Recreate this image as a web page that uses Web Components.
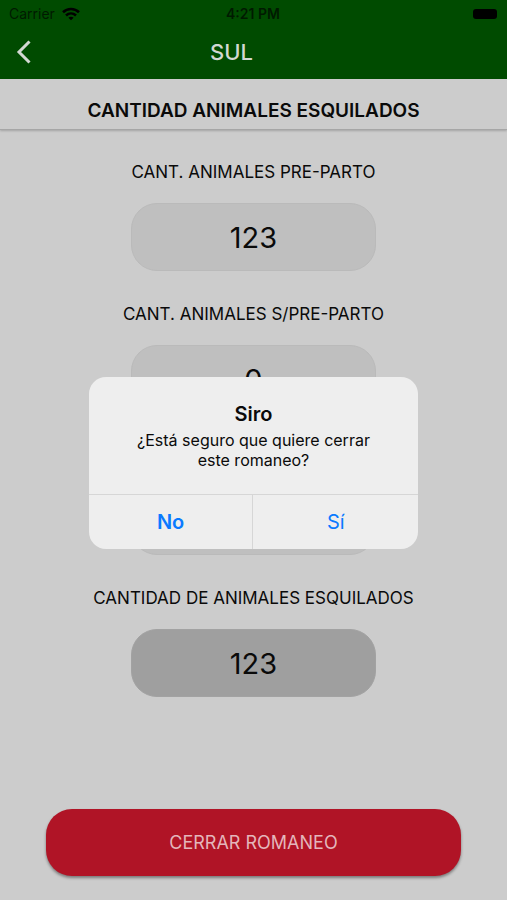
<!DOCTYPE html>
<html lang="es">
<head>
<meta charset="utf-8">
<meta name="viewport" content="width=device-width, initial-scale=1">
<title>SUL</title>
<style>
  html, body { height: 100%; }
  body { margin: 0; background: #ccc; color: #0a0a0a; font-family: Inter, "Liberation Sans", sans-serif; }
</style>
</head>
<body>
<siro-screen></siro-screen>
<script>
const define = (name, html, setup) => customElements.define(name, class extends HTMLElement {
  connectedCallback() {
    if (this.shadowRoot) return;
    const template = document.createElement('template');
    template.innerHTML = html;
    this.attachShadow({ mode: 'open' }).append(template.content.cloneNode(true));
    if (setup) setup(this, this.shadowRoot);
  }
});

define('status-bar', `
  <style>
    :host { display: grid; grid-template-columns: 1fr auto 1fr; align-items: center; height: 27px; padding: 0 10px 0 9px; font-size: 14px; line-height: 18px; color: #001a00; }
    .left { display: flex; align-items: center; gap: 7px; }
    .time { font-weight: 600; }
    .battery { justify-self: end; width: 24px; height: 10px; border-radius: 3px; background: #000; }
  </style>
  <span class="left"><span>Carrier</span>
    <svg width="18" height="14" viewBox="0 0 18 14" fill="none" stroke="#000" stroke-width="2.6" aria-label="Wi-Fi">
      <path d="M1 5.2C5.400 .9 12.600 .9 17 5.200"/><path d="M4 8.500C6.900 5.800 11.100 5.800 14 8.500"/><path d="M6.400 10.700C7.900 9.300 10.100 9.300 11.600 10.700L9 13.300Z" fill="#000" stroke="none"/>
    </svg></span>
  <span class="time">4:21 PM</span>
  <span class="battery" role="img" aria-label="Batería"></span>`);

define('nav-bar', `
  <style>
    :host { display: grid; grid-template-columns: 48px 1fr 92px; align-items: center; height: 50px; padding-bottom: 2px; color: #d2d8d2; }
    button { display: flex; align-items: center; justify-content: center; height: 44px; padding: 0; border: 0; background: none; color: inherit; }
    h1 { margin: 0; text-align: center; font-size: 22px; line-height: 28px; font-weight: 500; }
  </style>
  <button aria-label="Volver"><svg width="16" height="24" viewBox="0 0 16 24" fill="none" stroke="currentColor" stroke-width="3"><path d="M13.500 1.500 3 12 13.500 22.500"/></svg></button>
  <h1><slot></slot></h1>`);

define('section-title', `
  <style>
    :host { display: block; padding: 18px 16px 4px; border-bottom: 1px solid #a6a6a6; box-shadow: 0 1px 2px #0003; text-align: center; }
    h2 { margin: 0; font-size: 19px; line-height: 28px; font-weight: 600; }
  </style>
  <h2><slot></slot></h2>`);

define('count-field', `
  <style>
    :host { display: flex; flex-direction: column; align-items: center; gap: 18px; }
    label { min-height: 25px; font-size: 17px; line-height: 25px; text-align: center; }
    input { box-sizing: border-box; width: 48.5%; height: 68px; border: 1px solid #bababa; border-radius: 26px; padding: 1px 0 0; background: #bfbfbf; color: #0a0a0a; font: 400 29px/36px Inter, "Liberation Sans", sans-serif; text-align: center; }
    :host([total]) input { background: #9f9f9f; border-color: #a2a2a2; }
  </style>
  <label for="count"><slot></slot></label>
  <input id="count" inputmode="numeric">`, (host, root) => {
  const input = root.querySelector('input');
  input.value = host.getAttribute('value') || '';
  input.readOnly = host.hasAttribute('total');
  if (!host.textContent) input.setAttribute('aria-label', 'Cantidad');
});

define('primary-button', `
  <style>
    :host { display: block; }
    button { width: 100%; height: 67px; border: 0; border-radius: 26px; background: #b01426; color: #e4b6bb; box-shadow: 0 2px 3px #0006; font: 400 18px/24px Inter, "Liberation Sans", sans-serif; }
  </style>
  <button><slot></slot></button>`);

define('alert-dialog', `
  <style>
    :host { position: absolute; inset: 0; display: flex; align-items: center; justify-content: center; padding-top: 25px; }
    section { width: 65%; border-radius: 17px; overflow: hidden; background: #eee; text-align: center; }
    .copy { padding: 23px 44px 24px; }
    h2 { margin: 0; font-size: 20px; line-height: 28px; font-weight: 600; }
    p { margin: 2px 0 0; font-size: 16px; line-height: 20px; }
    .actions { display: grid; grid-template-columns: 1fr 1fr; border-top: 1px solid #d6d6d6; }
    button { height: 54px; border: 0; padding: 0; background: none; color: #0a7aff; font: 400 20px/26px Inter, "Liberation Sans", sans-serif; }
    button:first-child { font-weight: 600; border-right: 1px solid #d6d6d6; }
  </style>
  <section role="alertdialog" aria-modal="true" aria-labelledby="title" aria-describedby="message">
    <div class="copy"><h2 id="title"><slot name="title"></slot></h2><p id="message"><slot></slot></p></div>
    <div class="actions"><button>No</button><button>Sí</button></div>
  </section>`);

define('siro-screen', `
  <style>
    :host { position: relative; display: flex; flex-direction: column; min-height: 100%; }
    header { background: #004b00; }
    main { flex: 1; display: flex; flex-direction: column; padding: 30px 0 24px; }
    .fields { display: flex; flex-direction: column; gap: 31px; }
    primary-button { margin: auto 9% 0; }
  </style>
  <header><status-bar></status-bar><nav-bar>SUL</nav-bar></header>
  <section-title>CANTIDAD ANIMALES ESQUILADOS</section-title>
  <main>
    <div class="fields">
      <count-field value="123">CANT. ANIMALES PRE-PARTO</count-field>
      <count-field value="0">CANT. ANIMALES S/PRE-PARTO</count-field>
      <count-field></count-field>
      <count-field value="123" total>CANTIDAD DE ANIMALES ESQUILADOS</count-field>
    </div>
    <primary-button>CERRAR ROMANEO</primary-button>
  </main>
  <alert-dialog><span slot="title">Siro</span>¿Está seguro que quiere cerrar este romaneo?</alert-dialog>`);
</script>
</body>
</html>
